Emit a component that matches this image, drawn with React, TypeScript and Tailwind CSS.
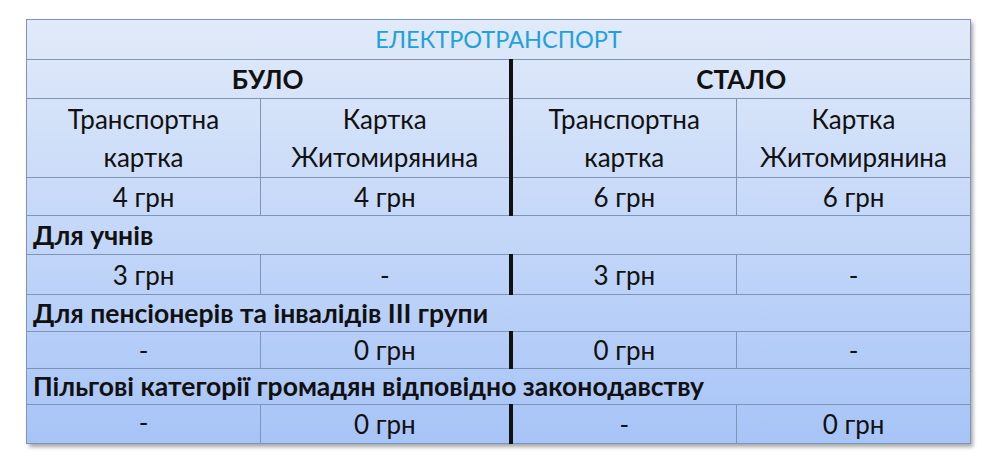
const font = { fontFamily: 'Lato, "Open Sans", sans-serif' };

const cell = 'border border-[#7d96b8] text-center p-0';
const thick = 'border-l-4 border-l-[#111]';

const rows: { label: string; values: string[] }[] = [
  { label: 'Для учнів', values: ['3 грн', '-', '3 грн', '-'] },
  { label: 'Для пенсіонерів та інвалідів ІІІ групи', values: ['-', '0 грн', '0 грн', '-'] },
  { label: 'Пільгові категорії громадян відповідно законодавству', values: ['-', '0 грн', '-', '0 грн'] },
];

const heights = [
  ['h-[39px]', 'h-[40px]'],
  ['h-[37px]', 'h-[37px]'],
  ['h-[36px]', 'h-[39px]'],
];

export default function App() {
  return (
    <div className="w-[984px] h-[457px] bg-white pt-[19px] pl-[26px]" style={font}>
      <div className="w-[944px] bg-linear-to-b from-[#e1eaf9] to-[#a7c4f7] shadow-[3px_3px_4px_rgba(0,0,0,0.35)]">
        <table className="w-[944px] border-collapse table-fixed text-[26px] text-[#111] leading-none">
          <colgroup>
            <col className="w-[234px]" />
            <col className="w-[250px]" />
            <col className="w-[226px]" />
            <col className="w-[234px]" />
          </colgroup>
          <tbody>
            <tr className="h-[40px]">
              <td colSpan={4} className={`${cell} align-middle text-[23.5px] text-[#21a1da]`}>ЕЛЕКТРОТРАНСПОРТ</td>
            </tr>
            <tr className="h-[39px] font-bold">
              <td colSpan={2} className={`${cell} align-middle`}>БУЛО</td>
              <td colSpan={2} className={`${cell} align-middle ${thick}`}>СТАЛО</td>
            </tr>
            <tr className="h-[79px] leading-[38px]">
              <td className={`${cell} align-middle`}>Транспортна<br />картка</td>
              <td className={`${cell} align-middle`}>Картка<br />Житомирянина</td>
              <td className={`${cell} align-middle ${thick}`}>Транспортна<br />картка</td>
              <td className={`${cell} align-middle`}>Картка<br />Житомирянина</td>
            </tr>
            <tr className="h-[38px]">
              <td className={`${cell} align-middle`}>4 грн</td>
              <td className={`${cell} align-middle`}>4 грн</td>
              <td className={`${cell} align-middle ${thick}`}>6 грн</td>
              <td className={`${cell} align-middle`}>6 грн</td>
            </tr>
            {rows.map((r, i) => (
              <>
                <tr key={`l${i}`} className={heights[i][0]}>
                  <td colSpan={4} className={`${cell} align-middle text-left pl-[6px] text-[26.5px] font-bold`}>
                    {r.label}
                  </td>
                </tr>
                <tr key={`v${i}`} className={heights[i][1]}>
                  {r.values.map((v, j) => (
                    <td
                      key={j}
                      className={`${cell} ${j === 2 ? thick : ''} ${i === 2 && j === 0 ? 'align-top pt-[4px]' : 'align-middle'}`}
                    >
                      {v}
                    </td>
                  ))}
                </tr>
              </>
            ))}
          </tbody>
        </table>
      </div>
    </div>
  );
}
